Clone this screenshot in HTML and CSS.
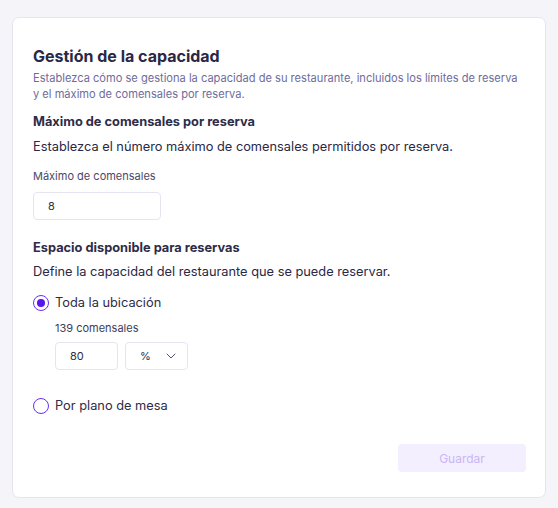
FILE: index.html
```html
<!DOCTYPE html>
<html lang="es">
<head>
<meta charset="utf-8">
<link rel="stylesheet" href="styles.css">
</head>
<body>
<div class="page">
  <section class="card">
    <h1 class="title">Gestión de la capacidad</h1>
    <p class="desc">Establezca cómo se gestiona la capacidad de su restaurante, incluidos los límites de reserva y el máximo de comensales por reserva.</p>

    <h2 class="subtitle">Máximo de comensales por reserva</h2>
    <p class="lead">Establezca el número máximo de comensales permitidos por reserva.</p>
    <label class="field-label">Máximo de comensales</label>
    <div class="input wide">8</div>

    <h2 class="subtitle sec2">Espacio disponible para reservas</h2>
    <p class="lead lead2">Define la capacidad del restaurante que se puede reservar.</p>

    <div class="radio-row">
      <span class="radio checked"></span>
      <span class="radio-label">Toda la ubicación</span>
    </div>
    <div class="sub">
      <div class="count">139 comensales</div>
      <div class="inputs">
        <div class="input small">80</div>
        <div class="input select"><span>%</span>
          <svg width="12" height="8" viewBox="0 0 12 8"><path d="M2 2 L6 6 L10 2" fill="none" stroke="#55536f" stroke-width="1" stroke-linecap="round" stroke-linejoin="round"/></svg>
        </div>
      </div>
    </div>
    <div class="radio-row r2">
      <span class="radio"></span>
      <span class="radio-label">Por plano de mesa</span>
    </div>

    <div class="actions">
      <button class="btn" disabled>Guardar</button>
    </div>
  </section>
</div>
</body>
</html>
```
FILE: styles.css
```css
html, body { margin: 0; padding: 0; }
body {
  background: #f5f4f9;
  font-family: Inter, "Noto Sans", sans-serif;
  color: #2e2c48;
}
.page { padding: 17px 12px 10px 12px; }
.card {
  background: #fff;
  border: 1px solid #e6e4f0;
  border-radius: 7px;
  padding: 26px 19px 26px 20px;
  height: 427px;
  box-sizing: content-box;
}
.title {
  margin: 0;
  font-size: 16px;
  font-weight: 700;
  line-height: 24px;
  color: #2a2844;
}
.desc {
  margin: 2px 0 0;
  font-size: 11.1px;
  line-height: 16px;
  color: #6e6c9c;
}
.subtitle {
  margin: 11px 0 0;
  font-size: 12.8px;
  font-weight: 700;
  line-height: 18px;
  color: #2e2c48;
}
.sec2 { margin-top: 19px; }
.lead {
  margin: 7px 0 0;
  font-size: 12.8px;
  line-height: 18px;
  color: #2a2844;
}
.lead2 { margin-top: 6px; }
.field-label {
  display: block;
  margin-top: 12px;
  font-size: 11px;
  line-height: 16px;
  color: #4a4868;
}
.input {
  box-sizing: border-box;
  border: 1px solid #e6e4f0;
  border-radius: 4px;
  height: 28px;
  font-size: 11px;
  line-height: 26px;
  padding: 0 14px;
  color: #2e2c48;
  background: #fff;
}
.wide { width: 128px; margin-top: 8px; }
.radio-row {
  display: flex;
  align-items: center;
  gap: 6px;
  margin-top: 13px;
}
.r2 { margin-top: 27px; }
.radio {
  box-sizing: border-box;
  width: 16px; height: 16px;
  border: 1.5px solid #6a2ff0;
  border-radius: 50%;
  position: relative;
}
.radio.checked::after {
  content: "";
  position: absolute;
  left: 2.5px; top: 2.5px;
  width: 8px; height: 8px;
  border-radius: 50%;
  background: #5a14f0;
}
.radio-label {
  font-size: 12.8px;
  line-height: 18px;
  color: #2e2c48;
}
.sub { padding-left: 22px; margin-top: 8px; }
.count { font-size: 11px; line-height: 16px; color: #3e3c5a; }
.inputs { display: flex; gap: 7px; margin-top: 6px; }
.small { width: 63px; }
.select {
  width: 63px;
  display: flex;
  align-items: center;
  justify-content: space-between;
  padding: 0 10px 0 14px;
}
.actions {
  display: flex;
  justify-content: flex-end;
  margin-top: 29px;
}
.btn {
  width: 128px;
  height: 28px;
  border: none;
  border-radius: 4px;
  background: #f3effe;
  color: #c8b6f6;
  font-family: Inter, "Noto Sans", sans-serif;
  font-size: 12px;
}
```
